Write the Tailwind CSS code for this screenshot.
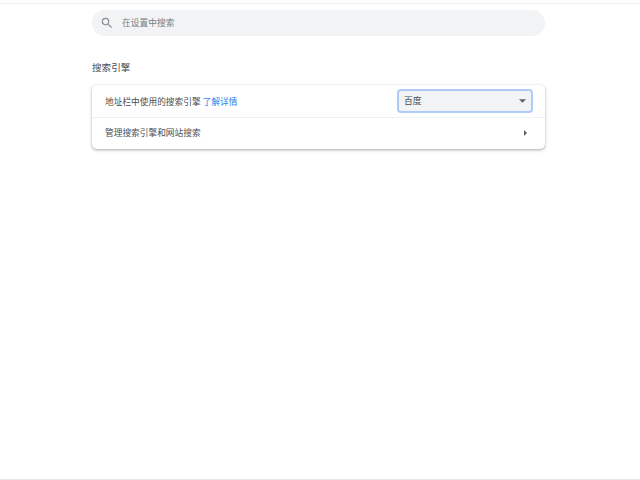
<!DOCTYPE html>
<html lang="zh-CN">
<head>
<meta charset="utf-8">
<script src="https://cdn.jsdelivr.net/npm/@tailwindcss/browser@4"></script>
</head>
<body class="m-0 bg-white overflow-hidden font-['Roboto','Noto_Sans_CJK_SC',sans-serif]">
<div class="w-[640px] h-[480px] flex flex-col">
  <div class="h-[3px] shrink-0 bg-white"></div>
  <div class="h-[1px] shrink-0 bg-[#eeeeee]"></div>
  <main class="flex-1 w-[453px] ml-[92px] pt-[6px]">
    <div class="h-[26px] rounded-full bg-[#f1f3f4] flex items-center pl-[8px]">
      <svg class="w-[14px] h-[14px] text-[#8a8f94]" viewBox="0 0 24 24" fill="currentColor"><path d="M15.5 14h-.79l-.28-.27A6.47 6.47 0 0 0 16 9.5 6.5 6.5 0 1 0 9.5 16c1.61 0 3.09-.59 4.23-1.57l.27.28v.79l5 4.99L20.49 19l-4.99-5zm-6 0C7.01 14 5 11.99 5 9.5S7.01 5 9.5 5 14 7.01 14 9.5 11.99 14 9.5 14z"/></svg>
      <span class="ml-[8px] text-[8.75px] leading-[14px] text-[#7a7e82]">在设置中搜索</span>
    </div>
    <h2 class="mt-[24px] text-[9.6px] leading-[16px] font-normal text-[#4a4e51]">搜索引擎</h2>
    <section class="mt-[9px] h-[64px] rounded-[5px] bg-white shadow-[0_1px_3px_1px_rgba(60,64,67,0.15),0_1px_2px_0_rgba(60,64,67,0.25)] flex flex-col">
      <div class="h-[33px] flex items-center justify-between pl-[13px] pr-[12px] border-b border-[#f1f1f1]">
        <div class="pt-[1px] text-[8.7px] leading-[14px] text-[#4a4e51]">地址栏中使用的搜索引擎 <span class="text-[#2f7de9]">了解详情</span></div>
        <div class="w-[136px] h-[24px] rounded-[4px] bg-[#f1f3f4] border-2 border-[#aecbfa] flex items-center justify-between pl-[5px] pr-[5px]">
          <span class="text-[8.75px] leading-[14px] text-[#4a4e51]">百度</span>
          <svg class="w-[7px] h-[4px]" viewBox="0 0 8 4"><path d="M0 0h8L4 4z" fill="#5f6368"/></svg>
        </div>
      </div>
      <div class="flex-1 flex items-center justify-between pl-[13px] pr-[18px] pb-[1px]">
        <span class="text-[8.7px] leading-[14px] text-[#4a4e51]">管理搜索引擎和网站搜索</span>
        <svg class="w-[3px] h-[6px]" viewBox="0 0 3 6"><path d="M0 0l3 3-3 3z" fill="#5f6368"/></svg>
      </div>
    </section>
  </main>
  <div class="h-[1px] shrink-0 bg-[#e8e8e8]"></div>
</div>
</body>
</html>
